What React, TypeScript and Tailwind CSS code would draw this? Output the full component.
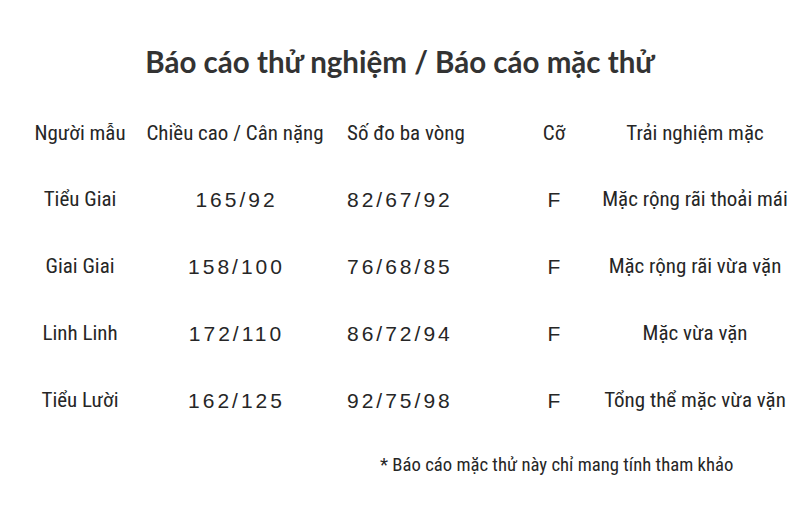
const rows = [
  { name: 'Tiểu Giai', hw: '165/92', bwh: '82/67/92', size: 'F', feel: 'Mặc rộng rãi thoải mái' },
  { name: 'Giai Giai', hw: '158/100', bwh: '76/68/85', size: 'F', feel: 'Mặc rộng rãi vừa vặn' },
  { name: 'Linh Linh', hw: '172/110', bwh: '86/72/94', size: 'F', feel: 'Mặc vừa vặn' },
  { name: 'Tiểu Lười', hw: '162/125', bwh: '92/75/98', size: 'F', feel: 'Tổng thể mặc vừa vặn' },
]

const narrow = "font-['Liberation_Sans_Narrow','Roboto_Condensed','Liberation_Sans',sans-serif]"
const nums = "font-['Liberation_Sans',Arial,sans-serif] tracking-[3px]"
const cols = 'grid grid-cols-[120px_190px_180px_88px_194px] px-[20px]'

export default function App() {
  return (
    <div className="h-[520px] w-[800px] bg-white text-[#262626] overflow-hidden">
      <h1 className="pt-[42px] text-center font-['Lato',sans-serif] text-[29.5px] font-bold leading-[40px] text-[#333]">
        Báo cáo thử nghiệm / Báo cáo mặc thử
      </h1>

      <div className={`${cols} ${narrow} mt-[24px] h-[56px] items-center text-[21px]`}>
        <div className="text-center">Người mẫu</div>
        <div className="text-center">Chiều cao / Cân nặng</div>
        <div className="pl-[17px]">Số đo ba vòng</div>
        <div className="text-center">Cỡ</div>
        <div className="text-center">Trải nghiệm mặc</div>
      </div>

      <div className="mt-[4px]">
        {rows.map((r) => (
          <div key={r.name} className={`${cols} h-[67px] items-center text-[21px]`}>
            <div className={`${narrow} text-center`}>{r.name}</div>
            <div className={`${nums} pl-[3px] text-center`}>{r.hw}</div>
            <div className={`${nums} pl-[17px]`}>{r.bwh}</div>
            <div className={`${nums} pl-[3px] text-center`}>{r.size}</div>
            <div className={`${narrow} text-center`}>{r.feel}</div>
          </div>
        ))}
      </div>

      <p className={`${narrow} mt-[18px] pl-[380px] text-[18.7px] leading-[26px]`}>
        * Báo cáo mặc thử này chỉ mang tính tham khảo
      </p>
    </div>
  )
}
